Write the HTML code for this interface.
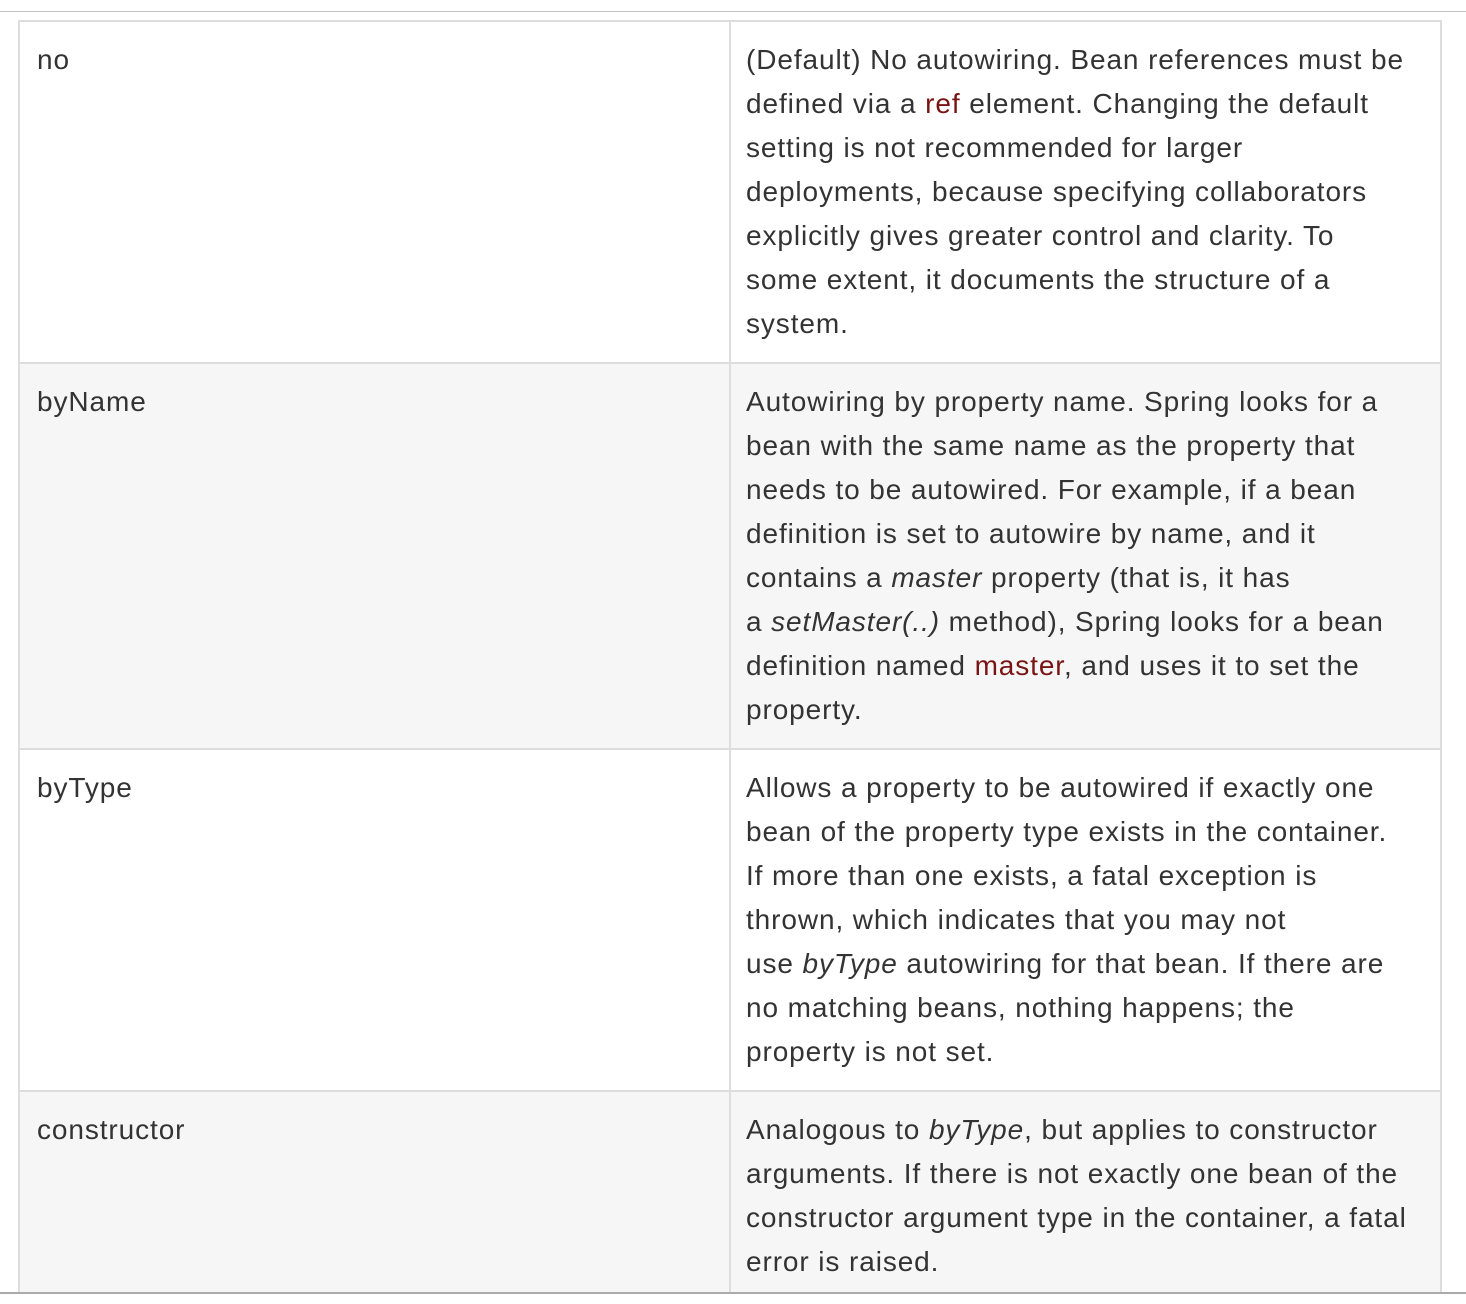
<!DOCTYPE html>
<html><head><meta charset="utf-8"><style>
html,body{margin:0;padding:0;width:1466px;height:1304px;background:#fff;overflow:hidden}
body{font-family:"Liberation Sans",sans-serif;color:#333;font-size:28px;letter-spacing:0.9px}
.topline{position:absolute;left:0;top:11px;width:1466px;height:1px;background:#c4c4c4}
.botline{position:absolute;left:0;top:1292px;width:1466px;height:2px;background:#aaa}
.row{position:absolute;left:18px;width:1420px;border:2px solid #ddd;border-bottom:none}
.row.g{background:#f6f6f6}
.c1{position:absolute;left:17px;top:16px;line-height:44px;white-space:nowrap}
.div{position:absolute;left:709px;top:0;bottom:0;width:2px;background:#ddd}
.c2{position:absolute;left:726px;top:16px;line-height:44px;white-space:nowrap}
.r{color:#7a1414}
</style></head><body>
<div class="topline"></div>
<div class="row" style="top:20px;height:340px"><div class="div"></div>
<div class="c1">no</div>
<div class="c2">(Default) No autowiring. Bean references must be<br>defined via a <span class="r">ref</span> element. Changing the default<br>setting is not recommended for larger<br>deployments, because specifying collaborators<br>explicitly gives greater control and clarity. To<br>some extent, it documents the structure of a<br>system.</div></div>
<div class="row g" style="top:362px;height:384px"><div class="div"></div>
<div class="c1">byName</div>
<div class="c2">Autowiring by property name. Spring looks for a<br>bean with the same name as the property that<br>needs to be autowired. For example, if a bean<br>definition is set to autowire by name, and it<br>contains a <i>master</i> property (that is, it has<br>a <i>setMaster(..)</i> method), Spring looks for a bean<br>definition named <span class="r">master</span>, and uses it to set the<br>property.</div></div>
<div class="row" style="top:748px;height:340px"><div class="div"></div>
<div class="c1">byType</div>
<div class="c2">Allows a property to be autowired if exactly one<br>bean of the property type exists in the container.<br>If more than one exists, a fatal exception is<br>thrown, which indicates that you may not<br>use <i>byType</i> autowiring for that bean. If there are<br>no matching beans, nothing happens; the<br>property is not set.</div></div>
<div class="row g" style="top:1090px;height:200px"><div class="div"></div>
<div class="c1">constructor</div>
<div class="c2">Analogous to <i>byType</i>, but applies to constructor<br>arguments. If there is not exactly one bean of the<br>constructor argument type in the container, a fatal<br>error is raised.</div></div>
<div class="botline"></div>
</body></html>
